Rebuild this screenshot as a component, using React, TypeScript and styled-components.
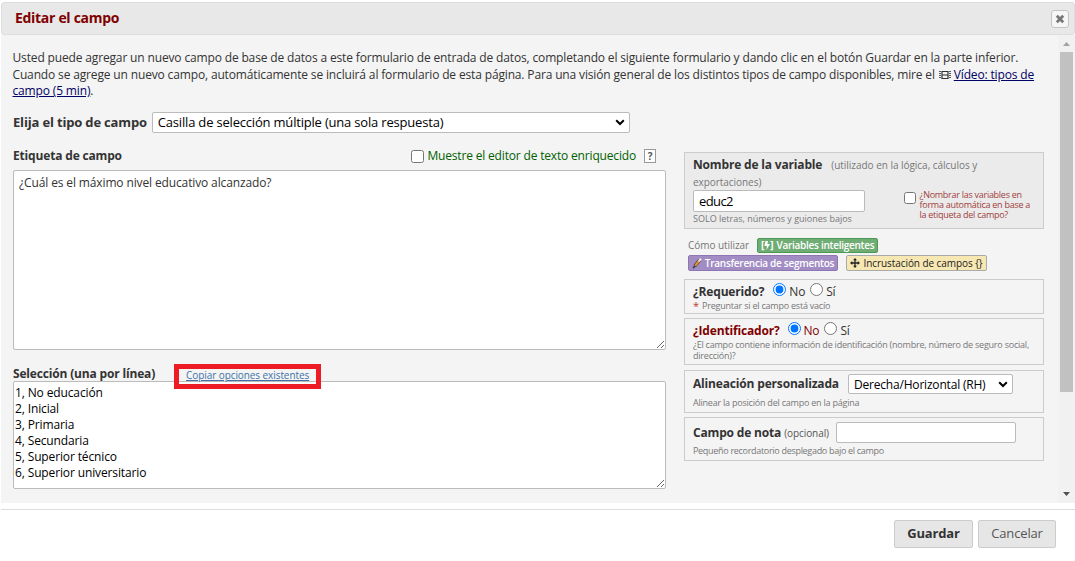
import React from 'react';
import styled, { createGlobalStyle } from 'styled-components';

const GlobalStyle = createGlobalStyle`
  * { box-sizing: border-box; }
  body {
    margin: 0;
    background: #fff;
    color: #333;
    font-family: 'Open Sans', 'Liberation Sans', sans-serif;
    font-size: 13px;
    overflow: hidden;
  }
  input, textarea, select, button { font-family: inherit; margin: 0; }
`;

const Dialog = styled.div`
  width: 1074px;
  height: 561px;
  margin-left: 1px;
  padding-top: 2px;
  display: flex;
  flex-direction: column;
`;

const TitleBar = styled.header`
  flex: none;
  height: 33px;
  padding: 0 5px 0 13px;
  display: flex;
  align-items: center;
  justify-content: space-between;
  background: #e8e8e8;
  border: 1px solid #ddd;
  border-radius: 3px;
`;

const Title = styled.h1`
  margin: 0;
  padding-bottom: 2px;
  font-size: 14px;
  line-height: 20px;
  font-weight: 700;
  letter-spacing: -0.3px;
  color: #800000;
`;

const CloseButton = styled.button`
  width: 18px;
  height: 18px;
  padding: 0;
  display: flex;
  align-items: center;
  justify-content: center;
  background: #f6f6f6;
  border: 1px solid #c5c5c5;
  border-radius: 3px;
`;

const Body = styled.div`
  flex: none;
  height: 468px;
  display: flex;
  justify-content: space-between;
  background: #f4f4f4;
`;

const Content = styled.main`
  width: 1043px;
  padding: 14px 0 0 12px;
`;

const Scrollbar = styled.div`
  width: 17px;
  padding: 7px 2px 7px;
  display: flex;
  flex-direction: column;
  align-items: center;
  background: #f1f1f1;
`;

const Thumb = styled.div`
  width: 13px;
  height: 340px;
  margin: 6px 0 auto;
  background: #c1c1c1;
`;

const Intro = styled.div`
  height: 62px;
  margin-left: -0.5px;
`;

const IntroLine = styled.div`
  height: 16.5px;
  font-size: 12px;
  line-height: 17px;
  white-space: nowrap;
  letter-spacing: -0.15px;
  svg { vertical-align: -1px; margin: 0 3px 0 1px; }
`;

const Link = styled.a`
  color: #000066;
  text-decoration: underline;
`;

const TypeRow = styled.div`
  height: 22px;
  display: flex;
  align-items: center;
  gap: 5px;
`;

const Label = styled.span<{ $size?: number; $color?: string }>`
  font-weight: 700;
  font-size: ${p => p.$size ?? 12}px;
  line-height: 16px;
  color: ${p => p.$color ?? '#333'};
  letter-spacing: -0.17px;
  white-space: nowrap;
`;

const SelectWrap = styled.div<{ $w: number; $h: number }>`
  width: ${p => p.$w}px;
  height: ${p => p.$h}px;
  padding: 0 4px 0 5px;
  display: flex;
  align-items: center;
  justify-content: space-between;
  background: #fff;
  border: 1px solid #bbb;
  border-radius: 2px;
`;

const Select = styled.select<{ $size: number }>`
  appearance: none;
  flex: 1;
  min-width: 0;
  height: 100%;
  padding: 0;
  border: 0;
  outline: 0;
  background: transparent;
  color: #000;
  font-size: ${p => p.$size}px;
  letter-spacing: -0.19px;
`;

const Columns = styled.div`
  display: flex;
  gap: 18px;
`;

const Left = styled.section`
  width: 653px;
  padding-top: 11px;
`;

const FieldHead = styled.div`
  height: 24px;
  margin-bottom: 2px;
  padding-right: 10px;
  display: flex;
  align-items: center;
  justify-content: space-between;
`;

const RichToggle = styled.label`
  display: flex;
  align-items: center;
  gap: 3px;
  color: #006000;
  font-size: 12px;
  line-height: 16px;
  letter-spacing: -0.17px;
  input { width: 13px; height: 13px; }
`;

const Help = styled.span`
  width: 12px;
  height: 14px;
  margin-left: 5px;
  border: 1px solid #999;
  background: #fff;
  color: #555;
  font-weight: 700;
  font-size: 10px;
  line-height: 12px;
  text-align: center;
`;

const TextArea = styled.textarea<{ $h: number; $pad: string; $color: string }>`
  display: block;
  width: 653px;
  height: ${p => p.$h}px;
  padding: ${p => p.$pad};
  border: 1px solid #bbb;
  border-radius: 2px;
  outline: 0;
  background: #fff;
  color: ${p => p.$color};
  font-size: 12px;
  line-height: 16px;
  letter-spacing: -0.13px;
  overflow: hidden;
`;

const ChoiceHead = styled.div`
  height: 31px;
  padding-top: 17px;
  display: flex;
  align-items: center;
  gap: 31px;
`;

const CopyLink = styled.a`
  position: relative;
  top: 1px;
  color: #3e72a8;
  font-size: 10px;
  line-height: 14px;
  letter-spacing: -0.08px;
  text-decoration: underline;
  white-space: nowrap;
`;

const Highlight = styled.span`
  position: absolute;
  left: -12px;
  top: -4px;
  width: 147px;
  height: 25px;
  border: 5px solid #ed1c24;
`;

const Right = styled.aside`
  width: 360px;
  padding-top: 19px;
  display: flex;
  flex-direction: column;
`;

const Box = styled.div<{ $h: number; $mb: number; $bg?: string; $pt?: number }>`
  height: ${p => p.$h}px;
  margin-bottom: ${p => p.$mb}px;
  padding: ${p => p.$pt ?? 3}px 8px 0;
  border: 1px solid #ccc;
  background: ${p => p.$bg ?? 'transparent'};
`;

const Row = styled.div<{ $h: number; $gap?: number }>`
  height: ${p => p.$h}px;
  display: flex;
  align-items: center;
  gap: ${p => p.$gap ?? 0}px;
`;

const Note = styled.div<{ $size?: number; $lh?: number; $ls?: number; $color?: string; $pt?: number; $pb?: number }>`
  padding: ${p => p.$pt ?? 0}px 0 ${p => p.$pb ?? 0}px;
  font-size: ${p => p.$size ?? 9}px;
  line-height: ${p => p.$lh ?? 12}px;
  letter-spacing: ${p => p.$ls ?? -0.22}px;
  color: ${p => p.$color ?? '#777'};
  white-space: nowrap;
`;

const TextInput = styled.input<{ $w: number; $h: number }>`
  width: ${p => p.$w}px;
  height: ${p => p.$h}px;
  padding: 0 5px;
  border: 1px solid #bbb;
  border-radius: 2px;
  outline: 0;
  background: #fff;
  color: #000;
  font-size: 13px;
  letter-spacing: -0.6px;
`;

const VariableRow = styled.div`
  display: flex;
  justify-content: space-between;
  padding-right: 5px;
`;

const AutoName = styled.label`
  display: flex;
  gap: 4px;
  input { width: 12px; height: 12px; margin-top: 2px; }
`;

const AutoNameText = styled.div`
  display: flex;
  flex-direction: column;
`;

const HowTo = styled.div`
  padding: 0 4px;
  height: 42px;
`;

const Badge = styled.button<{ $bg: string; $border: string; $color: string; $w: number; $h: number }>`
  width: ${p => p.$w}px;
  height: ${p => p.$h}px;
  padding: 0;
  display: flex;
  align-items: center;
  justify-content: center;
  gap: 3px;
  border: 1px solid ${p => p.$border};
  border-radius: 2px;
  background: ${p => p.$bg};
  color: ${p => p.$color};
  font-size: 10px;
  line-height: 13px;
  letter-spacing: -0.07px;
  white-space: nowrap;
`;

const Bracket = styled.span`
  display: flex;
  align-items: center;
  font-weight: 700;
`;

const Semi = styled.span`
  font-weight: 600;
  letter-spacing: -0.27px;
`;

const Radio = styled.label<{ $color?: string }>`
  display: flex;
  align-items: center;
  gap: 3px;
  font-size: 12px;
  line-height: 16px;
  letter-spacing: -0.2px;
  color: ${p => p.$color ?? '#333'};
  input { width: 13px; height: 13px; margin-top: -4px; }
`;

const Star = styled.span`
  color: #c0392b;
  font-size: 11px;
`;

const Footer = styled.footer`
  margin-top: 6px;
  padding: 10px 19px 0 0;
  display: flex;
  justify-content: flex-end;
  gap: 5px;
  border-top: 1px solid #ddd;
`;

const FooterButton = styled.button<{ $bold?: boolean; $w: number }>`
  width: ${p => p.$w}px;
  height: 28px;
  padding: 0 0 2px;
  border: 1px solid #ccc;
  border-radius: 2px;
  background: #e6e6e6;
  color: ${p => (p.$bold ? '#333' : '#555')};
  font-size: 13px;
  font-weight: ${p => (p.$bold ? 700 : 400)};
  letter-spacing: -0.15px;
`;

const Chevron = () => (
  <svg width="10" height="7" viewBox="0 0 10 7">
    <path d="M1.2 1.3 5 5 8.8 1.3" fill="none" stroke="#000" strokeWidth="2" />
  </svg>
);

const FilmIcon = () => (
  <svg width="12" height="10" viewBox="0 0 12 10">
    <path d="M3 1.5h6M3 8.5h6M3 5h6" stroke="#333" fill="none" />
    <path d="M3 1v8M9 1v8" stroke="#333" strokeWidth="1.2" />
    <path d="M1 1v8M11 1v8" stroke="#333" strokeWidth="1.6" strokeDasharray="1 1" />
  </svg>
);

const App = () => (
  <>
    <GlobalStyle />
    <Dialog>
      <TitleBar>
        <Title>Editar el campo</Title>
        <CloseButton aria-label="Cerrar">
          <svg width="10" height="10" viewBox="0 0 10 10">
            <path d="M1.8 1.8 8.2 8.2M8.2 1.8 1.8 8.2" stroke="#777" strokeWidth="2.8" />
          </svg>
        </CloseButton>
      </TitleBar>
      <Body>
        <Content>
          <Intro>
            <IntroLine>
              Usted puede agregar un nuevo campo de base de datos a este formulario de entrada de datos, completando el siguiente formulario y dando clic en el botón Guardar en la parte inferior.
            </IntroLine>
            <IntroLine>
              Cuando se agrege un nuevo campo, automáticamente se incluirá al formulario de esta página. Para una visión general de los distintos tipos de campo disponibles, mire el <FilmIcon /><Link>Vídeo: tipos de</Link>
            </IntroLine>
            <IntroLine><Link>campo (5 min)</Link>.</IntroLine>
          </Intro>
          <TypeRow>
            <Label $size={13}>Elija el tipo de campo</Label>
            <SelectWrap $w={478} $h={21}>
              <Select $size={13}>
                <option>Casilla de selección múltiple (una sola respuesta)</option>
              </Select>
              <Chevron />
            </SelectWrap>
          </TypeRow>
          <Columns>
            <Left>
              <FieldHead>
                <Label>Etiqueta de campo</Label>
                <RichToggle>
                  <input type="checkbox" />
                  Muestre el editor de texto enriquecido
                  <Help>?</Help>
                </RichToggle>
              </FieldHead>
              <TextArea $h={180} $pad="4px 5px" $color="#333" defaultValue="¿Cuál es el máximo nivel educativo alcanzado?" />
              <ChoiceHead>
                <Label>Selección (una por línea)</Label>
                <CopyLink>
                  Copiar opciones existentes
                  <Highlight />
                </CopyLink>
              </ChoiceHead>
              <TextArea
                $h={108} $pad="3px 1px" $color="#000"
                defaultValue={'1, No educación\n2, Inicial\n3, Primaria\n4, Secundaria\n5, Superior técnico\n6, Superior universitario'}
              />
            </Left>
            <Right>
              <Box $h={77} $mb={8} $bg="#ebebeb">
                <Row $h={18} $gap={9}>
                  <Label>Nombre de la variable</Label>
                  <Note $size={10} $ls={-0.03}>(utilizado en la lógica, cálculos y</Note>
                </Row>
                <Note $size={10} $lh={16} $ls={-0.05}>exportaciones)</Note>
                <VariableRow>
                  <div>
                    <TextInput $w={172} $h={22} defaultValue="educ2" />
                    <Note $ls={0} $pt={1}>SOLO letras, números y guiones bajos</Note>
                  </div>
                  <AutoName>
                    <input type="checkbox" />
                    <AutoNameText>
                      <Note $lh={10} $color="#a04040" $ls={-0.27}>¿Nombrar las variables en</Note>
                      <Note $lh={10} $color="#a04040" $ls={-0.27}>forma automática en base a</Note>
                      <Note $lh={10} $color="#a04040" $ls={-0.27}>la etiqueta del campo?</Note>
                    </AutoNameText>
                  </AutoName>
                </VariableRow>
              </Box>
              <HowTo>
                <Row $h={17} $gap={8}>
                  <Note $size={10} $ls={-0.05} $pb={2}>Cómo utilizar</Note>
                  <Badge $w={121} $h={15} $bg="#6fad74" $border="#4a9a55" $color="#fff">
                    <Bracket>
                      [
                      <svg width="6" height="9" viewBox="0 0 6 9"><path d="M1.5 0h2.6L3.4 3H6L2.4 9 3 5H.4Z" fill="#fff" /></svg>
                      ]
                    </Bracket>
                    <Semi>Variables inteligentes</Semi>
                  </Badge>
                </Row>
                <Row $h={18} $gap={8}>
                  <Badge $w={150} $h={16} $bg="#a28cc4" $border="#8d76b3" $color="#fff">
                    <svg width="10" height="11" viewBox="0 0 10 11">
                      <path d="M1 10.2 3.4 7.6" stroke="#444" strokeWidth="1.8" />
                      <path d="M2.8 8 7.6 2.2" stroke="#444" strokeWidth="3.4" />
                      <path d="M3.2 7.6 7 3" stroke="#ee9530" strokeWidth="2" />
                      <path d="M6.6 3.4 9 .8" stroke="#f3ead8" strokeWidth="2" />
                    </svg>
                    <Semi>Transferencia de segmentos</Semi>
                  </Badge>
                  <Badge $w={141} $h={16} $bg="#f7e7b3" $border="#aaa" $color="#222">
                    <svg width="10" height="10" viewBox="0 0 10 10">
                      <path d="M5 1v8M1 5h8" stroke="#222" strokeWidth="1.3" />
                      <path d="M5 0 7 2.3H3ZM5 10 7 7.7H3ZM0 5 2.3 3v4ZM10 5 7.7 3v4Z" fill="#222" />
                    </svg>
                    <span>Incrustación de campos {'{}'}</span>
                  </Badge>
                </Row>
              </HowTo>
              <Box $h={35} $mb={4}>
                <Row $h={17} $gap={9}>
                  <Label>¿Requerido?</Label>
                  <Row $h={17} $gap={5}>
                    <Radio><input type="radio" name="req" defaultChecked />No</Radio>
                    <Radio><input type="radio" name="req" />Sí</Radio>
                  </Row>
                </Row>
                <Row $h={11} $gap={3}><Star>*</Star><Note>Preguntar si el campo está vacío</Note></Row>
              </Box>
              <Box $h={47} $mb={5}>
                <Row $h={17} $gap={8}>
                  <Label $color="#800000">¿Identificador?</Label>
                  <Row $h={17} $gap={5}>
                    <Radio $color="#800000"><input type="radio" name="ident" defaultChecked />No</Radio>
                    <Radio><input type="radio" name="ident" />Sí</Radio>
                  </Row>
                </Row>
                <Note $lh={11}>¿El campo contiene información de identificación (nombre, número de seguro social,<br />dirección)?</Note>
              </Box>
              <Box $h={43} $mb={4}>
                <Row $h={20} $gap={9}>
                  <Label>Alineación personalizada</Label>
                  <SelectWrap $w={165} $h={20}>
                    <Select $size={12}><option>Derecha/Horizontal (RH)</option></Select>
                    <Chevron />
                  </SelectWrap>
                </Row>
                <Note $lh={18}>Alinear la posición del campo en la página</Note>
              </Box>
              <Box $h={44} $mb={0} $pt={4}>
                <Row $h={21} $gap={3}>
                  <Label>Campo de nota</Label>
                  <Row $h={21} $gap={7}>
                    <Note $size={10} $color="#555" $ls={-0.08}>(opcional)</Note>
                    <TextInput $w={180} $h={21} />
                  </Row>
                </Row>
                <Note $lh={16} $ls={-0.3}>Pequeño recordatorio desplegado bajo el campo</Note>
              </Box>
            </Right>
          </Columns>
        </Content>
        <Scrollbar>
          <svg width="7" height="4" viewBox="0 0 7 4"><path d="M0 4 3.5 0 7 4Z" fill="#a3a3a3" /></svg>
          <Thumb />
          <svg width="7" height="4" viewBox="0 0 7 4"><path d="M0 0 3.5 4 7 0Z" fill="#505050" /></svg>
        </Scrollbar>
      </Body>
      <Footer>
        <FooterButton $bold $w={79}>Guardar</FooterButton>
        <FooterButton $w={78}>Cancelar</FooterButton>
      </Footer>
    </Dialog>
  </>
);

export default App;
